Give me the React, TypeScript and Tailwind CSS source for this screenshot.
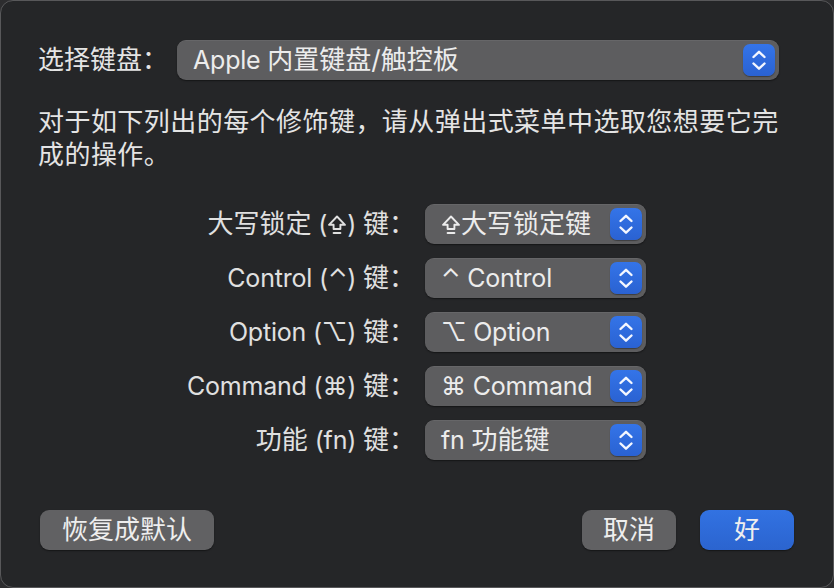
import type { ReactNode } from "react";

const FONT = {
  fontFamily: 'Inter, "Noto Sans CJK SC", "DejaVu Sans", sans-serif',
};

// Latin runs read a touch narrower than the CJK around them
function L({ children }: { children: ReactNode }) {
  return <span className="text-[25px] tracking-[-0.2px]">{children}</span>;
}

function CapsLock() {
  return (
    <svg
      width="20"
      height="22"
      viewBox="0 0 20 22"
      className="inline-block align-[-3px]"
      fill="none"
      stroke="currentColor"
      strokeWidth="1.9"
      strokeLinejoin="round"
      strokeLinecap="round"
    >
      <path d="M10 2.5 L18 10.8 H13.4 V15 H6.6 V10.8 H2 Z" />
      <path d="M6.6 19 H13.4" />
    </svg>
  );
}

function Stepper() {
  return (
    <div className="w-[32px] h-[32px] rounded-[7px] bg-gradient-to-b from-[#3474e8] to-[#2a62d2] shadow-[0_1px_1px_rgba(0,0,0,0.35)] flex items-center justify-center">
      <svg
        width="32"
        height="32"
        viewBox="0 0 32 32"
        fill="none"
        stroke="#f4f7ff"
        strokeWidth="2.4"
        strokeLinecap="round"
        strokeLinejoin="round"
      >
        <path d="M10.5 13 L16 7.8 L21.5 13" />
        <path d="M10.5 19.5 L16 24.7 L21.5 19.5" />
      </svg>
    </div>
  );
}

function Popup({ children, width }: { children: ReactNode; width: string }) {
  return (
    <div
      className={`${width} h-[40px] rounded-[9px] bg-[#5d5d5f] shadow-[0_1px_1.5px_rgba(0,0,0,0.45),inset_0_0.5px_0_rgba(255,255,255,0.12)] flex items-center pl-[16px] pr-[4px]`}
    >
      <span className="flex-1 text-[26px] text-[#ececec] whitespace-nowrap leading-none">
        {children}
      </span>
      <Stepper />
    </div>
  );
}

const rows: { label: ReactNode; value: ReactNode }[] = [
  {
    label: (
      <>
        大写锁定
        <L>
          {" "}(<CapsLock />){" "}
        </L>
        键：
      </>
    ),
    value: (
      <>
        <CapsLock />
        大写锁定键
      </>
    ),
  },
  {
    label: (
      <>
        <L>Control (⌃) </L>键：
      </>
    ),
    value: <L>⌃ Control</L>,
  },
  {
    label: (
      <>
        <L>Option (⌥) </L>键：
      </>
    ),
    value: <L>⌥ Option</L>,
  },
  {
    label: (
      <>
        <L>Command (⌘) </L>键：
      </>
    ),
    value: <L>⌘ Command</L>,
  },
  {
    label: (
      <>
        功能<L> (fn) </L>键：
      </>
    ),
    value: (
      <>
        <L>fn </L>功能键
      </>
    ),
  },
];

function Button({
  children,
  width,
  primary,
}: {
  children: ReactNode;
  width: string;
  primary?: boolean;
}) {
  return (
    <button
      className={`${width} h-[40px] rounded-[9px] text-[26px] text-[#eeeeee] leading-none flex items-center justify-center shadow-[0_1px_1.5px_rgba(0,0,0,0.45)] ${
        primary
          ? "bg-gradient-to-b from-[#3272e2] to-[#2b64cf]"
          : "bg-[#616163]"
      }`}
    >
      {children}
    </button>
  );
}

export default function App() {
  return (
    <div className="w-[834px] h-[588px] bg-[#2d2d2f]" style={FONT}>
      <div className="w-full h-full rounded-[13px] border border-[#58585a] bg-[#252628] pt-[39px] px-[37px] flex flex-col text-[#e4e4e4]">
        <div className="flex items-center h-[40px]">
          <span className="w-[139px] text-[26px] leading-none whitespace-nowrap">
            选择键盘：
          </span>
          <Popup width="w-[602px]">
            <L>Apple </L>内置键盘/触控板
          </Popup>
        </div>

        <p className="mt-[25px] w-[752px] text-[26px] leading-[33px] tracking-[0.45px]">
          对于如下列出的每个修饰键，请从弹出式菜单中选取您想要它完成的操作。
        </p>

        <div className="mt-[33px] flex flex-col gap-[14px]">
          {rows.map((row, i) => (
            <div key={i} className="flex items-center gap-[10px]">
              <span className="w-[377px] text-right text-[26px] leading-none whitespace-nowrap text-[#e0e0e0]">
                {row.label}
              </span>
              <Popup width="w-[221px]">{row.value}</Popup>
            </div>
          ))}
        </div>

        <div className="mt-[50px] flex items-center px-[2px]">
          <Button width="w-[174px]">恢复成默认</Button>
          <div className="flex-1" />
          <div className="flex gap-[24px]">
            <Button width="w-[94px]">取消</Button>
            <Button width="w-[94px]" primary>
              好
            </Button>
          </div>
        </div>
      </div>
    </div>
  );
}
